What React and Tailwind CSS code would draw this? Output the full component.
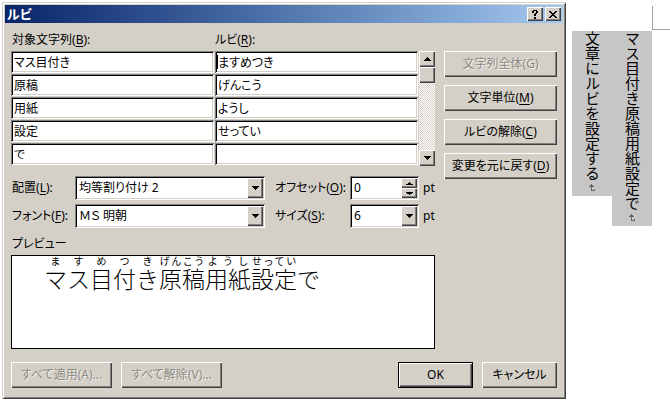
import React from "react";

const RAISED =
  "bg-[#d4d0c8] shadow-[inset_1px_1px_0_#fff,inset_-1px_-1px_0_#404040,inset_-2px_-2px_0_#808080]";
const SUNKEN =
  "bg-white shadow-[inset_1px_1px_0_#808080,inset_-1px_-1px_0_#fff,inset_2px_2px_0_#000,inset_-2px_-2px_0_#d4d0c8]";

const ROWS = [
  ["マス目付き", "ますめつき"],
  ["原稿", "げんこう"],
  ["用紙", "ようし"],
  ["設定", "せってい"],
  ["で", ""],
];

function Key({ text, k, disabled }) {
  return (
    <>
      {text}({disabled ? k : <u className="underline underline-offset-2">{k}</u>})
    </>
  );
}

function Arrow({ up, small }) {
  return (
    <svg
      viewBox="0 0 7 4"
      className={small ? "h-[3px] w-[7px]" : "h-1 w-[7px]"}
      preserveAspectRatio="none"
      shapeRendering="crispEdges"
      aria-hidden="true"
    >
      <path d={up ? "M3 0h1v1h1v1h1v1h1v1H0V3h1V2h1V1h1z" : "M0 0h7v1H6v1H5v1H4v1H3V3H2V2H1V1H0z"} />
    </svg>
  );
}

function Button({ children, className = "", disabled }) {
  return (
    <button
      type="button"
      disabled={disabled}
      className={`flex h-[26px] items-center justify-center whitespace-nowrap ${RAISED} ${
        disabled ? "text-[#8c8983] [text-shadow:1px_1px_0_#f4f2ee]" : "text-black"
      } ${className}`}
    >
      {children}
    </button>
  );
}

function Combo({ id, value, className = "" }) {
  return (
    <div className={`flex h-6 items-stretch p-[2px] ${SUNKEN} ${className}`}>
      <select
        id={id}
        className="min-w-0 flex-1 appearance-none bg-transparent pl-[2px] outline-none"
        defaultValue={value}
      >
        <option>{value}</option>
      </select>
      <span className={`flex w-4 shrink-0 items-center justify-center ${RAISED}`}>
        <Arrow />
      </span>
    </div>
  );
}

function TitleButton({ label, children }) {
  return (
    <button
      type="button"
      aria-label={label}
      className={`flex h-[14px] w-4 items-center justify-center ${RAISED}`}
    >
      {children}
    </button>
  );
}

function TitleBar() {
  return (
    <header className="flex h-[18px] items-center gap-[2px] bg-linear-to-r from-[#0a246a] to-[#a6caf0] px-[2px]">
      <h1 className="flex-1 text-[13px] font-bold text-white">ルビ</h1>
      <TitleButton label="ヘルプ">
        <svg viewBox="0 0 6 9" className="h-[9px] w-[6px]" shapeRendering="crispEdges" aria-hidden="true">
          <path d="M1 0h4v1H1zM0 1h2v2H0zM4 1h2v2H4zM3 3h2v1H3zM2 4h2v2H2zM2 7h2v2H2z" />
        </svg>
      </TitleButton>
      <TitleButton label="閉じる">
        <svg viewBox="0 0 8 7" className="h-[7px] w-2" shapeRendering="crispEdges" aria-hidden="true">
          <path d="M0 0h2v1H0zM6 0h2v1H6zM1 1h2v1H1zM5 1h2v1H5zM2 2h4v1H2zM3 3h2v1H3zM2 4h4v1H2zM1 5h2v1H1zM5 5h2v1H5zM0 6h2v1H0zM6 6h2v1H6z" />
        </svg>
      </TitleButton>
    </header>
  );
}

function Cell({ id, value, label, caret }) {
  return (
    <td className="pr-px pb-px">
      <div className={`flex h-[22px] items-center px-[2px] ${SUNKEN}`}>
        <span className={caret ? "h-[14px] w-px bg-black" : "w-px"} />
        <input
          id={id}
          aria-label={label}
          defaultValue={value}
          className="h-[18px] w-full min-w-0 bg-transparent outline-none"
        />
      </div>
    </td>
  );
}

function RubyTable() {
  return (
    <div className="flex items-end">
      <table className="flex-1 table-fixed border-collapse">
        <thead>
          <tr className="h-[22px] text-left leading-[22px]">
            <th className="pl-px font-normal">
              <label htmlFor="base-0"><Key text="対象文字列" k="B" />:</label>
            </th>
            <th className="font-normal">
              <label htmlFor="ruby-0"><Key text="ルビ" k="R" />:</label>
            </th>
          </tr>
        </thead>
        <tbody>
          {ROWS.map(([base, ruby], i) => (
            <tr key={i}>
              <Cell id={`base-${i}`} label={i ? `対象文字列 ${i + 1}` : undefined} value={base} />
              <Cell id={`ruby-${i}`} label={i ? `ルビ ${i + 1}` : undefined} value={ruby} caret={i === 0} />
            </tr>
          ))}
        </tbody>
      </table>
      <div className="flex h-[115px] w-4 flex-col bg-[repeating-conic-gradient(#fff_0_25%,#d4d0c8_0_50%)] bg-size-[2px_2px]">
        <button type="button" aria-label="上へ" className={`flex h-4 items-center justify-center ${RAISED}`}>
          <Arrow up />
        </button>
        <div className={`h-4 ${RAISED}`} />
        <div className="flex-1" />
        <button type="button" aria-label="下へ" className={`flex h-4 items-center justify-center ${RAISED}`}>
          <Arrow />
        </button>
      </div>
    </div>
  );
}

function Settings() {
  return (
    <div className="mt-[10px] grid grid-cols-[64px_minmax(0,1fr)_85px_69px_16px] items-center gap-y-1">
      <label htmlFor="align" className="pl-px"><Key text="配置" k="L" />:</label>
      <Combo id="align" value="均等割り付け 2" />
      <label htmlFor="offset" className="pl-[10px]"><Key text="オフセット" k="O" />:</label>
      <div className={`flex h-6 items-stretch p-[2px] ${SUNKEN}`}>
        <input id="offset" defaultValue="0" className="min-w-0 flex-1 bg-transparent pl-[2px] outline-none" />
        <div className="flex w-4 flex-col">
          <button type="button" aria-label="増やす" className={`flex flex-1 items-center justify-center ${RAISED}`}>
            <Arrow up small />
          </button>
          <button type="button" aria-label="減らす" className={`flex flex-1 items-center justify-center ${RAISED}`}>
            <Arrow small />
          </button>
        </div>
      </div>
      <span className="pl-1">pt</span>
      <label htmlFor="font" className="pl-px"><Key text="フォント" k="F" />:</label>
      <Combo id="font" value="ＭＳ 明朝" />
      <label htmlFor="size" className="pl-[10px]"><Key text="サイズ" k="S" />:</label>
      <Combo id="size" value="6" />
      <span className="pl-1">pt</span>
    </div>
  );
}

function Preview() {
  return (
    <section className="mt-[5px]">
      <h2 className="pl-px leading-[22px]">プレビュー</h2>
      <div className="h-[94px] border border-black bg-white pt-[5px] pl-8 font-['Liberation_Sans','Noto_Sans_CJK_JP',sans-serif] text-[23px] leading-[34px] font-light whitespace-nowrap [font-feature-settings:normal]">
        {ROWS.map(([base, ruby]) =>
          ruby ? (
            <ruby key={base}>
              {base}
              <rt className="text-[10px] leading-3 font-normal">{ruby}</rt>
            </ruby>
          ) : (
            base
          )
        )}
      </div>
    </section>
  );
}

function Dialog() {
  return (
    <main className="flex min-w-0 flex-1 flex-col bg-[#d4d0c8] p-[3px] shadow-[inset_1px_1px_0_#d4d0c8,inset_-1px_-1px_0_#404040,inset_2px_2px_0_#fff,inset_-2px_-2px_0_#808080]">
      <TitleBar />
      <div className="px-[6px] pt-[6px] pb-2">
        <div className="flex gap-[9px]">
          <div className="min-w-0 flex-1">
            <RubyTable />
            <Settings />
            <Preview />
          </div>
          <div className="flex w-[113px] flex-col gap-2 pt-[22px]">
            <Button disabled><Key text="文字列全体" k="G" disabled /></Button>
            <Button><Key text="文字単位" k="M" /></Button>
            <Button><Key text="ルビの解除" k="C" /></Button>
            <Button><Key text="変更を元に戻す" k="D" /></Button>
          </div>
        </div>
        <footer className="mt-[13px] flex gap-[9px]">
          <Button disabled className="w-[101px]"><Key text="すべて適用" k="A" disabled />...</Button>
          <Button disabled className="w-[101px]"><Key text="すべて解除" k="V" disabled />...</Button>
          <div className="flex-1" />
          <Button className="w-[75px] border border-black">OK</Button>
          <Button className="w-[75px]">キャンセル</Button>
        </footer>
      </div>
    </main>
  );
}

function LineEnd() {
  return (
    <svg viewBox="0 0 8 8" className="mx-auto h-2 w-2" shapeRendering="crispEdges" aria-hidden="true">
      <path fill="#666" d="M3 0h1v1H3zM2 1h3v1H2zM1 2h5v1H1zM3 3h1v4H3zM4 6h3v1H4zM6 5h1v1H6z" />
    </svg>
  );
}

function Line({ children }) {
  return (
    <div className="w-10 bg-[#c6c6c6] pb-1">
      <p className="h-max w-10 pb-[3px] leading-10 whitespace-nowrap [writing-mode:vertical-rl]">{children}</p>
      <LineEnd />
    </div>
  );
}

function DocumentPage() {
  return (
    <aside className="flex w-[98px] shrink-0 pt-1 font-['Noto_Sans_CJK_JP',sans-serif] text-[15px] [font-feature-settings:normal]">
      <div className="flex flex-row-reverse items-start pt-[25px]">
        <Line>マス目付き原稿用紙設定で</Line>
        <Line>文章にルビを設定する</Line>
      </div>
      <div className="h-6 flex-1 border-b border-l border-[#a0a0a0]" />
    </aside>
  );
}

export default function App() {
  return (
    <div className="flex min-h-screen items-start gap-[6px] bg-white pt-[2px] pl-[2px] font-['Noto_Sans','Noto_Sans_CJK_JP',sans-serif] text-[12px] leading-4 text-black [font-feature-settings:'palt']">
      <Dialog />
      <DocumentPage />
    </div>
  );
}
